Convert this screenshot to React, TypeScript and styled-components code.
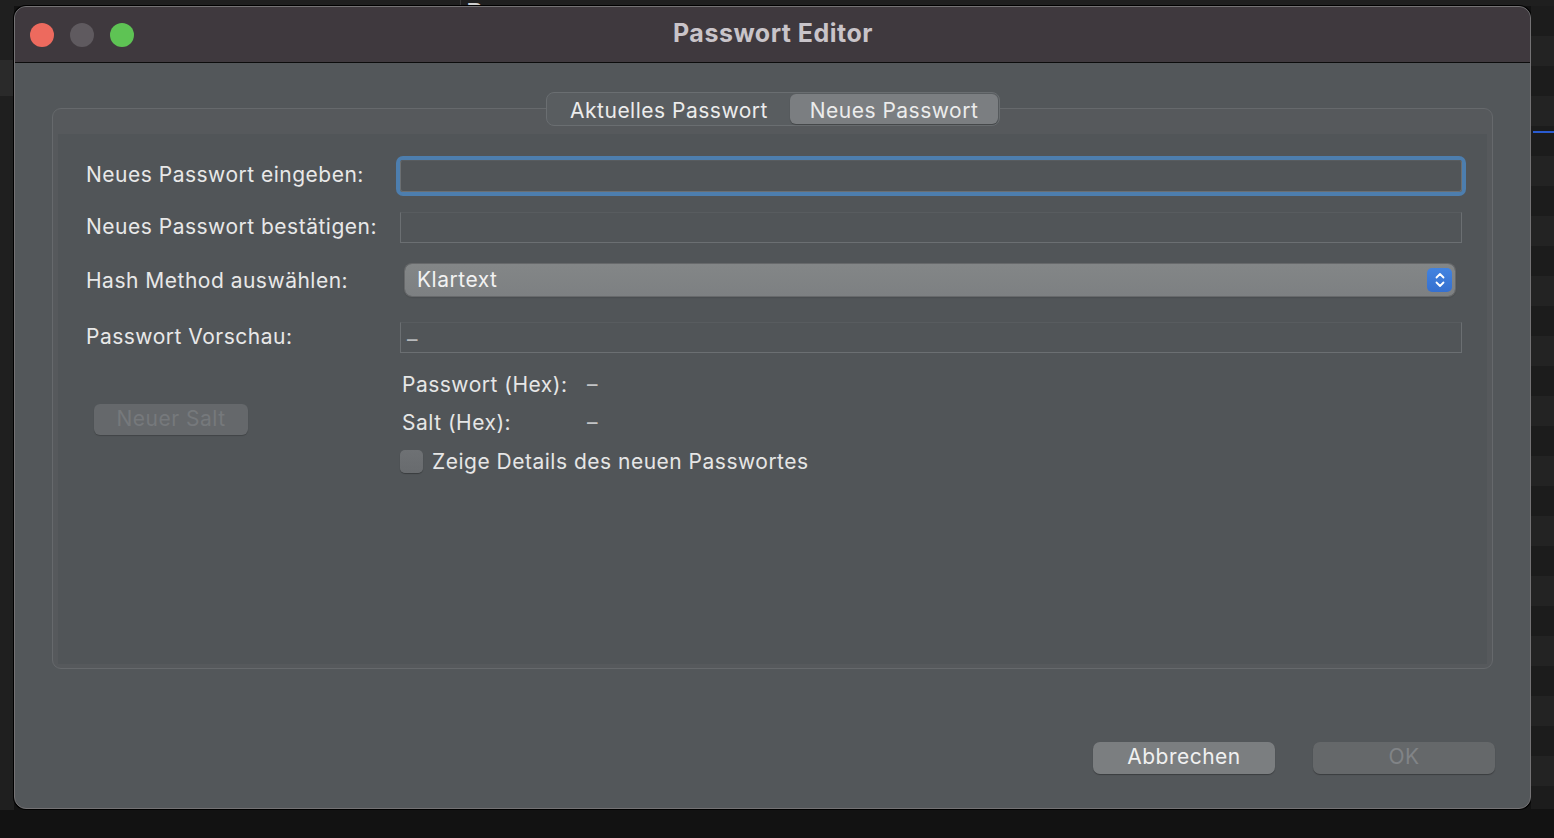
import styled, { createGlobalStyle } from 'styled-components'

const GlobalStyle = createGlobalStyle`
    html, body {
        margin: 0;
        padding: 0;
        background: #1c1c1c;
    }
    body {
        font-family: Inter, "Liberation Sans", sans-serif;
        -webkit-font-smoothing: antialiased;
    }
`;

const StepperIcon = () => (
    <svg width="12" height="18" viewBox="0 0 12 18" fill="none">
        <path d="M2.5 6.5 L6 3 L9.5 6.5" stroke="#fff" strokeWidth="1.8" strokeLinecap="round" strokeLinejoin="round" />
        <path d="M2.5 11.5 L6 15 L9.5 11.5" stroke="#fff" strokeWidth="1.8" strokeLinecap="round" strokeLinejoin="round" />
    </svg>
)

const App = () => {
    return (
        <Desktop>
            <GlobalStyle />
            <TopStrip>
                <BackText style={{ marginLeft: 102 }}>sn</BackText>
                <BackDivider />
                <BackText>Bean</BackText>
            </TopStrip>
            <WindowRow>
                <Window>
                    <TitleBar>
                        <Lights>
                            <Light color="#ed6a5e" />
                            <Light color="#5f5a5f" />
                            <Light color="#5ec354" />
                        </Lights>
                        <Title>Passwort Editor</Title>
                    </TitleBar>
                    <Content>
                        <TabBar>
                            <Segmented>
                                <Segment width={242}>Aktuelles Passwort</Segment>
                                <Segment width={208} active>Neues Passwort</Segment>
                            </Segmented>
                        </TabBar>
                        <GroupBox>
                            <Panel>
                                <FormRow top={26}>
                                    <Label>Neues Passwort eingeben:</Label>
                                    <TextField focused />
                                </FormRow>
                                <FormRow top={20}>
                                    <Label>Neues Passwort bestätigen:</Label>
                                    <TextField />
                                </FormRow>
                                <FormRow top={21}>
                                    <Label shift={2}>Hash Method auswählen:</Label>
                                    <Select>
                                        <SelectText>Klartext</SelectText>
                                        <Stepper><StepperIcon /></Stepper>
                                    </Select>
                                </FormRow>
                                <FormRow top={26}>
                                    <Label>Passwort Vorschau:</Label>
                                    <TextField><Dash>–</Dash></TextField>
                                </FormRow>
                                <Lower>
                                    <SaltColumn>
                                        <SmallButton disabled>Neuer Salt</SmallButton>
                                    </SaltColumn>
                                    <DetailColumn>
                                        <HexGrid>
                                            <span>Passwort (Hex):</span>
                                            <HexValue>–</HexValue>
                                            <span>Salt (Hex):</span>
                                            <HexValue>–</HexValue>
                                        </HexGrid>
                                        <CheckRow>
                                            <Checkbox />
                                            <span>Zeige Details des neuen Passwortes</span>
                                        </CheckRow>
                                    </DetailColumn>
                                </Lower>
                            </Panel>
                        </GroupBox>
                        <Footer>
                            <DialogButton>Abbrechen</DialogButton>
                            <DialogButton disabled>OK</DialogButton>
                        </Footer>
                    </Content>
                </Window>
                <RightGutter>
                    <BlueLine />
                </RightGutter>
            </WindowRow>
        </Desktop>
    )
}

const Desktop = styled.div`
    width: 1554px;
    height: 838px;
    overflow: hidden;
    background: #121212;
    display: flex;
    flex-direction: column;
`;
const TopStrip = styled.div`
    height: 6px;
    overflow: hidden;
    display: flex;
    align-items: flex-end;
    background: #1f1f1f;
`;
const BackText = styled.span`
    font-family: "Liberation Sans", sans-serif;
    font-weight: 700;
    font-size: 22px;
    line-height: 22px;
    margin-bottom: -16px;
    color: #cfcfcf;
`;
const BackDivider = styled.div`
    width: 1px;
    height: 6px;
    background: #3a3a3a;
    margin: 0 6px 0 332px;
`;
const WindowRow = styled.div`
    display: flex;
    height: 804px;
    padding-left: 14px;
    background: linear-gradient(to bottom, #1f1f1f 0 54px, #2a2a2a 54px 90px, #1f1f1f 90px);
    background-size: 14px 100%;
    background-repeat: no-repeat;
`;
const Window = styled.div`
    width: 1517px;
    height: 803px;
    box-sizing: border-box;
    display: flex;
    flex-direction: column;
    border-radius: 12px;
    border: 1px solid #747274;
    box-shadow: 0 0 0 1px #000;
    background: #53575a;
    overflow: hidden;
`;
const TitleBar = styled.div`
    height: 55px;
    flex-shrink: 0;
    display: flex;
    align-items: center;
    background: #3f393e;
    border-bottom: 1px solid #0c0c0c;
`;
const Lights = styled.div`
    display: flex;
    gap: 16px;
    padding-left: 15px;
`;
const Light = styled.div<{ color: string }>`
    width: 24px;
    height: 24px;
    border-radius: 50%;
    background: ${p => p.color};
`;
const Title = styled.div`
    flex: 1;
    text-align: center;
    margin-right: 118px;
    margin-top: -3px;
    font-size: 25px;
    font-weight: 700;
    color: #c9c4c9;
    letter-spacing: 0.5px;
`;
const Content = styled.div`
    flex: 1;
    display: flex;
    flex-direction: column;
    padding: 0 37px;
`;
const TabBar = styled.div`
    display: flex;
    justify-content: center;
    margin-top: 29px;
    margin-left: 1px;
    position: relative;
    z-index: 1;
`;
const Segmented = styled.div`
    display: flex;
    height: 34px;
    box-sizing: border-box;
    padding: 1px;
    border-radius: 8px;
    border: 1px solid #6a6e71;
    background: #595d60;
`;
const Segment = styled.div<{ width: number; active?: boolean }>`
    width: ${p => p.width}px;
    display: flex;
    align-items: center;
    justify-content: center;
    padding-top: 2px;
    box-sizing: border-box;
    border-radius: 6px;
    font-size: 21px;
    letter-spacing: 0.5px;
    color: #ececec;
    background: ${p => (p.active ? '#7b7e81' : 'transparent')};
    box-shadow: ${p => (p.active ? '0 1px 1px rgba(0,0,0,0.25)' : 'none')};
`;
const GroupBox = styled.div`
    margin-top: -18px;
    height: 561px;
    box-sizing: border-box;
    border: 1px solid #66696c;
    border-radius: 9px;
    background: #56595c;
    padding: 25px 5px 4px 5px;
    display: flex;
`;
const Panel = styled.div`
    flex: 1;
    background: #515558;
    padding: 0 25px 0 28px;
    display: flex;
    flex-direction: column;
    color: #e6e6e6;
    font-size: 21px;
    letter-spacing: 0.5px;
`;
const FormRow = styled.div<{ top: number }>`
    display: flex;
    align-items: center;
    margin-top: ${p => p.top}px;
`;
const Label = styled.div<{ shift?: number }>`
    width: 314px;
    flex-shrink: 0;
    margin-top: ${p => (p.shift ?? 0) * 2 - 3}px;
    color: #e8e8e8;
`;
const TextField = styled.div<{ focused?: boolean }>`
    flex: 1;
    height: ${p => (p.focused ? 32 : 31)}px;
    box-sizing: border-box;
    display: flex;
    align-items: center;
    padding-left: 6px;
    border: 1px solid #6b6f72;
    border-top-color: #585c5f;
    border-radius: ${p => (p.focused ? 3 : 0)}px;
    box-shadow: ${p => (p.focused ? '0 0 0 4px #4d7eae' : 'none')};
`;
const Dash = styled.span`
    color: #b8babc;
    margin-top: 4px;
`;
const Select = styled.div`
    flex: 1;
    height: 32px;
    margin: 0 7px 0 5px;
    box-sizing: border-box;
    border-radius: 7px;
    background: linear-gradient(to bottom, #838687, #7d8082);
    box-shadow: 0 0 0 1px #67696b, 0 1px 2px rgba(0,0,0,0.3);
    display: flex;
    align-items: center;
    justify-content: space-between;
    padding: 0 3px 0 12px;
`;
const SelectText = styled.span`
    color: #f2f2f2;
    margin-top: -1px;
`;
const Stepper = styled.div`
    width: 25px;
    height: 24px;
    border-radius: 5px;
    background: linear-gradient(to bottom, #4283e0, #3670cf);
    display: flex;
    align-items: center;
    justify-content: center;
`;
const Lower = styled.div`
    display: flex;
    margin-top: 12px;
`;
const SaltColumn = styled.div`
    width: 314px;
    flex-shrink: 0;
    padding-top: 39px;
    padding-left: 8px;
    box-sizing: border-box;
`;
const SmallButton = styled.button`
    width: 154px;
    height: 31px;
    border: none;
    border-radius: 6px;
    background: #65686b;
    color: #76797c;
    font-family: inherit;
    font-size: 21px;
    letter-spacing: 0.5px;
    padding: 0 0 2px;
    box-shadow: 0 1px 1px rgba(0,0,0,0.2);
`;
const DetailColumn = styled.div`
    display: flex;
    flex-direction: column;
    padding-left: 2px;
`;
const HexGrid = styled.div`
    display: grid;
    grid-template-columns: 185px auto;
    grid-auto-rows: 38px;
    align-items: center;
`;
const HexValue = styled.span`
    color: #c2c4c6;
`;
const CheckRow = styled.div`
    display: flex;
    align-items: center;
    gap: 9px;
    height: 40px;
    margin-left: -2px;
`;
const Checkbox = styled.div`
    width: 23px;
    height: 23px;
    border-radius: 5px;
    background: linear-gradient(to bottom, #6e7174, #686b6e);
    box-shadow: 0 1px 1px rgba(0,0,0,0.3);
`;
const Footer = styled.div`
    display: flex;
    justify-content: flex-end;
    gap: 38px;
    margin-top: auto;
    padding-bottom: 34px;
    margin-right: -2px;
`;
const DialogButton = styled.button`
    width: 182px;
    height: 32px;
    border: none;
    border-radius: 7px;
    padding: 0 0 4px;
    font-family: inherit;
    font-size: 21px;
    letter-spacing: 0.5px;
    background: ${p => (p.disabled ? '#65686a' : '#7b7e80')};
    color: ${p => (p.disabled ? '#818487' : '#f0f0f0')};
    box-shadow: 0 1px 1px rgba(0,0,0,0.3);
`;
const RightGutter = styled.div`
    flex: 1;
    height: 803px;
    background: repeating-linear-gradient(to bottom, #1c1c1c 0 30px, #232323 30px 60px);
    padding-top: 125px;
    box-sizing: border-box;
`;
const BlueLine = styled.div`
    height: 2px;
    margin-left: 2px;
    background: #2a5bd0;
`;

export default App
